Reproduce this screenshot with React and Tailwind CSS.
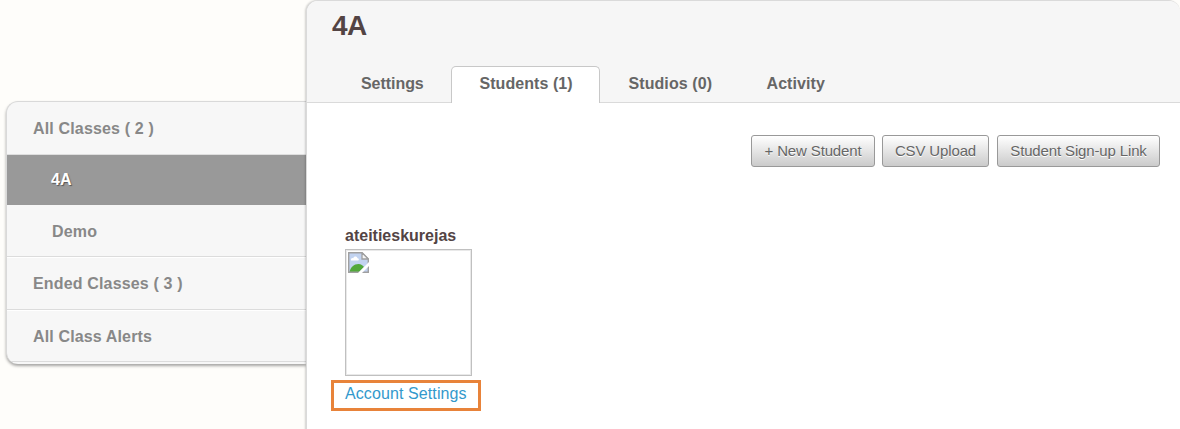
function BrokenImage() {
  return (
    <svg width="21" height="21" viewBox="0 0 21 21" className="block">
      <path d="M.7 20.300V.7H14L20.300 7V20.300Z" fill="#c2d3f0" />
      <path d="M3 8.500C2.500 6.500 4.300 5.800 5.200 6.200C5.800 3.800 9 3.800 9.500 6.200C11.200 6.200 11.200 8.500 10 8.500Z" fill="#fff" />
      <path d="M1.500 20C2.500 15 6 12 10.500 12C13 12 15 13.500 16 15L11 20Z" fill="#52a83b" />
      <path d="M.7 20.300V.7H14L20.300 7V20.300Z" fill="none" stroke="#a0a0a0" strokeWidth="1.400" />
      <path d="M14 .7V7H20.300Z" fill="#f5f5f5" stroke="#a0a0a0" strokeWidth="1.300" />
      <path d="M22 9L9.500 21.500H13.500L22 13Z" fill="#fff" />
    </svg>
  );
}

const buttonClass =
  "h-8 rounded-[3px] border border-[#999] bg-linear-to-b from-white to-[#cbcbcb] text-center text-[15px] leading-[30px] tracking-[-0.14px] text-[#666] [text-shadow:0_1px_0_#fff] whitespace-nowrap";

export default function App() {
  return (
    <div className="flex h-[429px] w-[1180px] overflow-hidden bg-[#fefdfa] font-['Liberation_Sans',Arial,sans-serif] text-base">
      <aside className="w-[306px] shrink-0 pt-[101px] pl-[6px]">
        <nav className="h-[263px] overflow-hidden rounded-l-[12px] border-t border-l border-[#d9d9d9] bg-[#f7f7f7] font-bold text-[#888] shadow-[0_2px_3px_rgba(0,0,0,0.35)]">
          <div className="h-[53px] border-b border-[#dedede] pl-[26px] leading-[53px] tracking-[0.16px]">All Classes ( 2 )</div>
          <div className="h-[50px] bg-[#999] pl-[44px] leading-[49px] text-white [text-shadow:1px_1px_1px_#555]">4A</div>
          <div className="h-[52px] border-b border-[#dcdcdc] pl-[45px] leading-[53px] tracking-[0.16px]">Demo</div>
          <div className="h-[53px] border-t border-b border-t-white border-b-[#dcdcdc] pl-[26px] leading-[51px] tracking-[0.16px]">Ended Classes ( 3 )</div>
          <div className="h-[52px] border-t border-b border-t-white border-b-[#dcdcdc] pl-[26px] leading-[51px] tracking-[0.14px]">All Class Alerts</div>
        </nav>
      </aside>
      <main className="z-10 flex h-[440px] w-[874px] flex-col rounded-t-[12px] border-t border-l border-[#dadada] bg-white shadow-[-1px_0_2px_rgba(0,0,0,0.18)]">
        <header className="flex h-[102px] shrink-0 flex-col justify-between rounded-t-[11px] border-b border-[#dadada] bg-[#f6f6f6]">
          <h1 className="pt-[8px] pl-[25px] text-[28px] leading-[34px] font-bold tracking-[-0.5px] text-[#534444]">4A</h1>
          <div className="-mb-px flex h-[37px] pl-[25px] leading-[35px] font-bold text-[#666]">
            <div className="w-[119px] pl-[29px] tracking-[-0.05px]">Settings</div>
            <div className="w-[149px] rounded-t-[5px] border border-b-0 border-[#c8c8c8] bg-white pl-[27.500px] leading-[33px] tracking-[0.06px]">Students (1)</div>
            <div className="w-[138px] pl-[28.500px] tracking-[0.08px]">Studios (0)</div>
            <div className="pl-[28.500px] tracking-[0.08px]">Activity</div>
          </div>
        </header>
        <section className="flex flex-col">
          <div className="flex justify-end pt-[32px] pr-5">
            <button className={buttonClass + " mr-[7px] w-[124px]"}>+ New Student</button>
            <button className={buttonClass + " mr-2 w-[107px]"}>CSV Upload</button>
            <button className={buttonClass + " w-[163px]"}>Student Sign-up Link</button>
          </div>
          <article className="mt-[58px] ml-[24px] flex w-[150px] flex-col">
            <div className="h-[24px] pl-[14px] leading-[22px] font-bold text-[#534444]">ateitieskurejas</div>
            <div className="ml-[14px] h-[127px] w-[127px] border border-[#c0c0c0] p-[2px] shadow-[inset_0_0_0_1px_#e9e9e9]">
              <BrokenImage />
            </div>
            <a className="mt-[4px] h-[31px] border-3 border-[#e8833a] pl-[11px] leading-[22px] tracking-[0.1px] whitespace-nowrap text-[#3399cc]">
              Account Settings
            </a>
          </article>
        </section>
      </main>
    </div>
  );
}
